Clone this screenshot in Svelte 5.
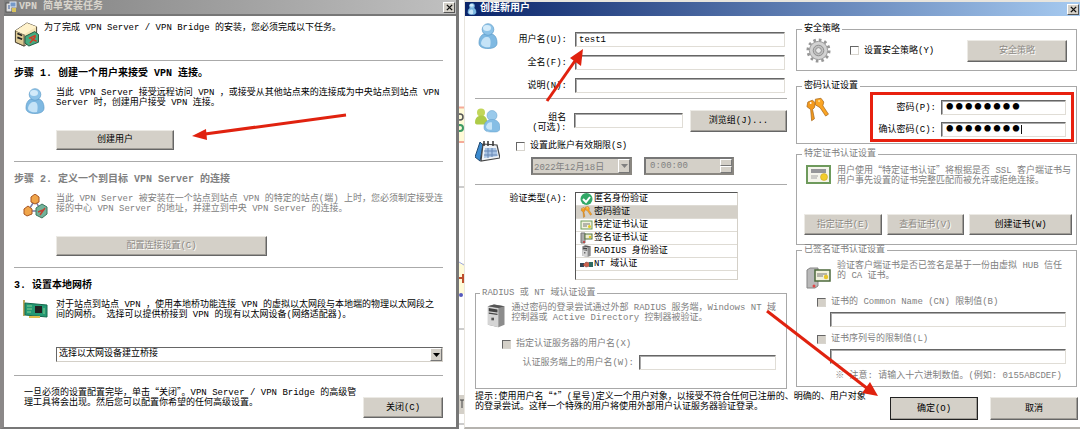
<script>
    let userName = $state('test1');
    let fullName = $state('');
    let note = $state('');
    let groupName = $state('');
    let password = $state('password');
    let confirmPassword = $state('password');
    let expires = $state(false);
    let usePolicy = $state(false);
    let authType = $state('password');

    const authTypes = [
        { id: 'anonymous', name: '匿名身份验证' },
        { id: 'password', name: '密码验证' },
        { id: 'cert', name: '特定证书认证' },
        { id: 'signed', name: '签名证书认证' },
        { id: 'radius', name: 'RADIUS 身份验证' },
        { id: 'nt', name: 'NT 域认证' }
    ];
</script>

{#snippet person(cls)}
    <svg class={cls} viewBox="0 0 20 26" aria-hidden="true">
        <path d="M1 20C1 14 4 11.500 6 11H14C17 12 19 15 19 20C19 24 15 25.500 10 25.500S1 24 1 20Z" fill="#7fb9e2" stroke="#5c9bc9" stroke-width=".7" />
        <path d="M3 20C4 15 7 13.500 10 14S13 20 12 24C7 25 3 23 3 20Z" fill="#c5e3f7" />
        <circle cx="10" cy="6.500" r="5.800" fill="#8dc3e8" stroke="#5c9bc9" stroke-width=".7" />
        <ellipse cx="9" cy="5" rx="4" ry="3" fill="#d3ebfa" />
    </svg>
{/snippet}

{#snippet cert()}
    <svg class="icon" viewBox="0 0 25 19" aria-hidden="true">
        <rect x="1" y="1" width="23" height="17" fill="#f5f5ec" stroke="#6e9a5c" stroke-width="2" />
        <path d="M5 5H20M5 7H20" stroke="#77787f" stroke-width="1.500" />
        <path d="M5 11H12M5 13H11" stroke="#a3a3a3" />
        <circle cx="18" cy="12" r="3.500" fill="#f3cd2c" stroke="#c59b1c" stroke-width=".5" />
    </svg>
{/snippet}

{#snippet keys(cls)}
    <svg class={cls} viewBox="0 0 25 26" aria-hidden="true">
        <path d="M2 5L7 3L10 6L9 11L7 13L9 23L6 25L5 13L1 10Z" fill="#f39a1d" stroke="#a7691f" stroke-width=".8" />
        <path d="M10 2L16 1L19 5L18 9L24 18L21 20L15 11L10 8Z" fill="#fba524" stroke="#a7691f" stroke-width=".8" />
        <circle cx="5" cy="6" r="1" fill="#fff" /><circle cx="14" cy="4" r="1.200" fill="#ffe08a" />
    </svg>
{/snippet}

{#snippet tower(cls)}
    <svg class={cls} viewBox="0 0 21 27" aria-hidden="true">
        <path d="M1 3L8 1L20 3V24L13 27L1 24Z" fill="#8c8c8c" />
        <path d="M1 3L13 5V27L1 24Z" fill="#d5d5d5" />
        <path d="M1 3L8 1L20 3L13 5Z" fill="#555" />
        <path d="M2 5L12 6.500V10L2 8.500ZM2 10L12 11.500V13L2 11.500Z" fill="#444" />
        <rect x="5" y="16" width="3" height="3" fill="#555" />
    </svg>
{/snippet}

{#snippet down()}
    <svg class="down" viewBox="0 0 7 4" aria-hidden="true"><path d="M0 0H7L3.500 4Z" fill="currentColor" /></svg>
{/snippet}

<div class="desktop">
    <section class="window setup">
        <header class="titlebar inactive">
            <svg class="title-icon" viewBox="0 0 12 12" aria-hidden="true">
                <rect x="1" y="2" width="6" height="9" fill="#ddd" stroke="#555" />
                <rect x="5" y="1" width="6" height="5" fill="#7398c9" stroke="#dfe6ef" />
                <path d="M3 5H5M3 7H5" stroke="#395b9c" /><rect x="7" y="7" width="4" height="4" fill="#d8c35e" />
            </svg>
            <h1>VPN 简单安装任务</h1>
            <button class="close" aria-label="关闭窗口"><svg viewBox="0 0 8 8"><path d="M1 1L7 7M7 1L1 7" stroke="#111" stroke-width="1.600" /></svg></button>
        </header>

        <div class="setup-body">
            <div class="intro">
                <svg class="icon" viewBox="0 0 25 26" aria-hidden="true">
                    <path d="M1 9L13 1L23 5V17L10 25L1 21Z" fill="#f3e3b4" stroke="#4c4536" />
                    <path d="M1 9L10 13V25L1 21Z" fill="#dcc993" stroke="#4c4536" />
                    <path d="M1 9L13 1L23 5L10 13Z" fill="#fff2cb" />
                    <path d="M3 12L8 14M3 16L8 18" stroke="#222" stroke-width="1.800" />
                    <path d="M11 15L21 10L25 13V21L15 25L11 22Z" fill="#45ab80" stroke="#22573f" />
                    <path d="M15 17L22 14M16 22L22 15M17 17L23 20" stroke="#d33c24" stroke-width="1.500" />
                </svg>
                <p>为了完成 VPN Server / VPN Bridge 的安装，您必须完成以下任务。</p>
            </div>

            <section class="step first">
                <h2>步骤 1. 创建一个用户来接受 VPN 连接。</h2>
                <div class="step-grid">
                    {@render person('person')}
                    <p>当此 VPN Server 接受远程访问 VPN ，或接受从其他站点来的连接成为中央站点到站点 VPN<br>Server 时，创建用户接受 VPN 连接。</p>
                    <button class="btn create">创建用户</button>
                </div>
            </section>

            <section class="step off">
                <h2>步骤 2. 定义一个到目标 VPN Server 的连接</h2>
                <div class="step-grid">
                    <svg class="icon" viewBox="0 0 25 25" aria-hidden="true">
                        <path d="M12 6L5 17L18 17Z" fill="none" stroke="#777ba8" stroke-width="1.500" />
                        <path d="M8 3L12 0L16 3V8L12 10L8 8Z" fill="#f0a54a" stroke="#a75522" />
                        <path d="M1 15L5 12L9 15V20L4 22L1 20Z" fill="#f0a54a" stroke="#a75522" />
                        <path d="M13 14L19 10L24 13V20L19 24L13 21Z" fill="#72b39a" stroke="#3d765f" />
                        <path d="M15 18L20 16M17 21L22 14" stroke="#c54132" stroke-width="1.500" />
                    </svg>
                    <p>当此 VPN Server 被安装在一个站点到站点 VPN 的特定的站点(端) 上时，您必须制定接受连<br>接的中心 VPN Server 的地址，并建立到中央 VPN Server 的连接。</p>
                    <button class="btn connect" disabled>配置连接设置(C)</button>
                </div>
            </section>

            <section class="step last">
                <h2>3. 设置本地网桥</h2>
                <div class="step-grid">
                    <svg class="icon" viewBox="0 0 25 19" aria-hidden="true">
                        <path d="M1 0V16" stroke="#bca65c" stroke-width="2" />
                        <path d="M2 3L24 5V17L2 15Z" fill="#249a74" stroke="#17694d" />
                        <rect x="12" y="6" width="7" height="7" fill="#222" />
                        <path d="M4 6H9M4 9H9M21 8V14M4 12H8" stroke="#8ad18f" />
                        <path d="M6 16H17V18H6Z" fill="#dfbd4d" />
                    </svg>
                    <p>对于站点到站点 VPN ，使用本地桥功能连接 VPN 的虚拟以太网段与本地端的物理以太网段之<br>间的网桥。 选择可以提供桥接到 VPN 的现有以太网设备(网络适配器)。</p>
                    <div class="combo">
                        <select aria-label="以太网设备"><option>选择以太网设备建立桥接</option></select>
                        <span class="arrow-box">{@render down()}</span>
                    </div>
                </div>
            </section>

            <footer class="setup-footer">
                <p>一旦必须的设置配置完毕，单击<span class="cn">“</span>关闭<span class="cn">”</span>。VPN Server / VPN Bridge 的高级管<br>理工具将会出现。然后您可以配置你希望的任何高级设置。</p>
                <button class="btn">关闭(C)</button>
            </footer>
        </div>
    </section>

    <svg class="behind" viewBox="0 0 5 429" aria-hidden="true">
        <rect width="5" height="429" fill="#fff" />
        <path d="M0 107H5V142H0Z" fill="#fffbd8" /><path d="M0 107.500H5M0 142H5" stroke="#f6ab98" stroke-width="2" />
        <circle cx="1" cy="117" r="3" fill="none" stroke="#555" stroke-width="1.500" /><circle cx="1" cy="128" r="3" fill="none" stroke="#3d9963" stroke-width="2" />
        <path d="M0 187H5M0 329H5M0 424H5" stroke="#999" />
        <path d="M0 263H5V294H0Z" fill="#fffbd8" /><path d="M0 262L5 265" stroke="#9ba7e5" />
        <path d="M0 278H4M4 274V283" stroke="#bd4d2b" stroke-width="2" /><circle cx="2" cy="295" r="2" fill="#5559bd" />
        <rect y="395" width="5" height="19" fill="#d4d0c8" /><path d="M1 400H5M3 400V408" stroke="#444" />
    </svg>

    <section class="window user">
        <header class="titlebar active">
            {@render person('title-icon')}
            <h1>创建新用户</h1>
            <button class="close" aria-label="关闭窗口"><svg viewBox="0 0 8 8"><path d="M1 1L7 7M7 1L1 7" stroke="#111" stroke-width="1.600" /></svg></button>
        </header>

        <div class="user-body">
            <div class="left">
                <div class="identity">
                    {@render person('person')}
                    <div class="fields">
                        <label for="user">用户名(U):</label><input id="user" type="text" bind:value={userName}>
                        <label for="full">全名(F):</label><input id="full" type="text" bind:value={fullName}>
                        <label for="note">说明(N):</label><input id="note" type="text" bind:value={note}>
                    </div>
                </div>

                <div class="group">
                    <svg class="icon" viewBox="0 0 25 24" aria-hidden="true">
                        <circle cx="6" cy="4" r="4" fill="#c2d65a" /><path d="M0 14C0 8 4 7 7 7S13 10 12 16H3Q0 16 0 14Z" fill="#aecb48" />
                        <circle cx="17" cy="7" r="5" fill="#9acaeb" stroke="#639fca" stroke-width=".5" />
                        <path d="M9 19C9 14 12 11 17 11S25 14 25 19S21 23.500 17 23.500S9 23 9 19Z" fill="#86bee5" stroke="#639fca" stroke-width=".5" />
                        <path d="M11 18C12 14 15 13 17 14V21C13 22 11 20 11 18Z" fill="#c7e5f8" />
                    </svg>
                    <label for="group">组名<br>(可选):</label>
                    <input id="group" type="text" bind:value={groupName}>
                    <button class="btn">浏览组(J)...</button>
                </div>

                <div class="expiry">
                    <svg class="icon" viewBox="0 0 25 23" aria-hidden="true">
                        <path d="M5 2L0 17L5 21L8 5Z" fill="#3b8bd0" stroke="#234b73" />
                        <path d="M8 4L22 5L25 18L6 21Z" fill="#f0f3f6" stroke="#444" stroke-width="1.200" />
                        <path d="M10 8L21 8L23 16L9 18Z" fill="#a9c4e4" />
                        <path d="M9 11H22M9 15H22M13 8V18M17 8V17" stroke="#6888b5" />
                        <path d="M9 1V6M13 1V6M18 1V6" stroke="#333" stroke-width="1.500" />
                    </svg>
                    <div class="expiry-fields">
                        <label class="check"><input type="checkbox" bind:checked={expires}>设置此账户有效期限(S)</label>
                        <div class="when">
                            <div class="combo date off"><input type="text" aria-label="日期" value="2022年12月18日" disabled><span class="arrow-box">{@render down()}</span></div>
                            <div class="combo time off">
                                <input type="text" aria-label="时间" value="0:00:00" disabled>
                                <span class="spin"><button disabled aria-label="增加"></button><button disabled aria-label="减少"></button></span>
                            </div>
                        </div>
                    </div>
                </div>

                <div class="auth">
                    <span class="auth-label" id="auth-label">验证类型(A):</span>
                    <ul role="listbox" aria-labelledby="auth-label">
                        {#each authTypes as type (type.id)}
                            <li role="option" aria-selected={authType === type.id}>
                                <button class="row" class:selected={authType === type.id} onclick={() => authType = type.id}>
                                    {#if type.id === 'anonymous'}
                                        <svg class="mini" viewBox="0 0 13 12"><circle cx="6.500" cy="6" r="6" fill="#31a866" /><path d="M3 6L6 9L10 4" fill="none" stroke="#fff" stroke-width="2" /></svg>
                                    {:else if type.id === 'password'}
                                        {@render keys('mini')}
                                    {:else if type.id === 'cert'}
                                        <svg class="mini" viewBox="0 0 13 12"><rect x="1" y="2" width="11" height="8" fill="#f2f2df" stroke="#6e9a5c" /><path d="M3 5H10M3 7H7" stroke="#777" /><circle cx="9.500" cy="7.500" r="1.500" fill="#e2c91f" /></svg>
                                    {:else if type.id === 'signed'}
                                        <svg class="mini" viewBox="0 0 13 12"><path d="M1 1H5V11H1Z" fill="#aaa" stroke="#777" /><rect x="5" y="2" width="7" height="5" fill="#eeedd0" stroke="#52723f" /><circle cx="10" cy="5" r="1.200" fill="#e2c91f" /><circle cx="4" cy="10" r="1" fill="#c33" /></svg>
                                    {:else if type.id === 'radius'}
                                        {@render tower('mini')}
                                    {:else}
                                        <svg class="mini" viewBox="0 0 13 12"><path d="M0 5H4V9H0Z" fill="#345" /><path d="M3 7L6 4L10 5V8L6 9Z" fill="#c9604c" stroke="#733" stroke-width=".5" /><path d="M9 4H13V9H9Z" fill="#2f6b63" /></svg>
                                    {/if}
                                    {type.name}
                                </button>
                            </li>
                        {/each}
                    </ul>
                </div>

                <fieldset class="radius off">
                    <legend>RADIUS 或 NT 域认证设置</legend>
                    <div class="info">
                        {@render tower('tower')}
                        <p>通过密码的登录尝试通过外部 RADIUS 服务端，Windows NT 域<br>控制器或 Active Directory 控制器被验证。</p>
                    </div>
                    <label class="check"><input type="checkbox" disabled>指定认证服务器的用户名(X)</label>
                    <div class="server-user"><label for="server">认证服务端上的用户名(W):</label><input id="server" type="text"></div>
                </fieldset>
            </div>

            <div class="right">
                <fieldset class="policy">
                    <legend>安全策略</legend>
                    <svg class="icon" viewBox="0 0 26 26" aria-hidden="true">
                        <circle cx="13" cy="13" r="11" fill="none" stroke="#979797" stroke-width="3" stroke-dasharray="2.700 3.060" />
                        <circle cx="13" cy="13" r="9.500" fill="#d2d2d2" stroke="#999" />
                        <circle cx="13" cy="13" r="5.500" fill="#c0c0c0" stroke="#8b8b8b" />
                        <circle cx="13" cy="13" r="3" fill="#e9e9e9" stroke="#8b8b8b" />
                    </svg>
                    <label class="check"><input type="checkbox" bind:checked={usePolicy}>设置安全策略(Y)</label>
                    <button class="btn" disabled>安全策略</button>
                </fieldset>

                <fieldset class="secret">
                    <legend>密码认证设置</legend>
                    {@render keys('icon')}
                    <div class="highlight">
                        <label for="pw">密码(P):</label><input id="pw" type="password" bind:value={password}>
                        <label for="pw2">确认密码(C):</label><span class="focused"><input id="pw2" type="password" bind:value={confirmPassword}><i></i></span>
                    </div>
                </fieldset>

                <fieldset class="user-cert off">
                    <legend>特定证书认证设置</legend>
                    <div class="info">
                        {@render cert()}
                        <p>用户使用<span class="cn">“</span>特定证书认证<span class="cn">”</span>将根据是否 SSL 客户端证书与<br>用户事先设置的证书完整匹配而被允许或拒绝连接。</p>
                    </div>
                    <div class="cert-buttons">
                        <button class="btn" disabled>指定证书(E)</button>
                        <button class="btn" disabled>查看证书(V)</button>
                        <button class="btn wide">创建证书(W)</button>
                    </div>
                </fieldset>

                <fieldset class="signed-cert off">
                    <legend>已签名证书认证设置</legend>
                    <div class="info">
                        <svg class="icon" viewBox="0 0 25 22" aria-hidden="true">
                            <path d="M1 3L4 1H12V19L9 21H1Z" fill="#b9b9b9" stroke="#858585" />
                            <rect x="9" y="3" width="15" height="11" fill="#f2f1dc" stroke="#4d6a3c" stroke-width="1.500" />
                            <path d="M11 7H21M11 9H17" stroke="#777" /><circle cx="20" cy="10" r="2.200" fill="#e8c529" />
                            <circle cx="8" cy="19" r="1.500" fill="#e04848" />
                        </svg>
                        <p>验证客户端证书是否已签名是基于一份由虚拟 HUB 信任<br>的 CA 证书。</p>
                    </div>
                    <div class="limits">
                        <label class="check"><input type="checkbox" disabled>证书的 Common Name (CN) 限制值(B)</label>
                        <input type="text" aria-label="Common Name">
                        <label class="check"><input type="checkbox" disabled>证书序列号的限制值(L)</label>
                        <input type="text" aria-label="证书序列号">
                        <p>※ 注意: 请输入十六进制数值。(例如: 0155ABCDEF)</p>
                    </div>
                </fieldset>
            </div>
        </div>

        <footer class="user-footer">
            <p>提示:使用用户名<span class="cn">“</span>*<span class="cn">”</span>(星号)定义一个用户对象，以接受不符合任何已注册的、明确的、用户对象<br>的登录尝试。这样一个特殊的用户将使用外部用户认证服务器验证登录。</p>
            <button class="btn ok">确定(O)</button>
            <button class="btn">取消</button>
        </footer>
    </section>

    <svg class="arrows" viewBox="0 0 1080 429" preserveAspectRatio="none" aria-hidden="true">
        <g stroke="#e0220f" stroke-width="3" fill="#e0220f">
            <path d="M346 115L205 134" /><path d="M192 136L206 129L207 140Z" stroke="none" />
            <path d="M547 101L577 58" /><path d="M583 49L581 66L570 58Z" stroke="none" />
            <path d="M767 311L868 389" /><path d="M878 396L862 393L870 382Z" stroke="none" />
        </g>
    </svg>
</div>

<style>
    :global(*) { box-sizing: border-box; }
    :global(body) { margin: 0; background: #fff; }

    .desktop { position: relative; display: grid; grid-template-columns: 459fr 5px 616fr; min-height: 100vh; overflow: hidden; font: 9px/10px "Liberation Mono", "Noto Sans CJK SC", monospace; color: #000; }
    .arrows { position: absolute; inset: 0; width: 100%; height: 100%; pointer-events: none; }
    .behind { width: 5px; height: 429px; }

    h1, h2, p, ul, fieldset { margin: 0; padding: 0; }
    p, label, legend, .auth-label { white-space: nowrap; }
    input, select, button { font: inherit; color: inherit; }
    .cn { font-family: "Noto Sans CJK SC", sans-serif; }
    .off { color: #808080; }

    .window { min-width: 0; background: #fff; }
    .setup { border-left: 4px solid #8b8888; border-right: 3px solid #777; border-bottom: 2px solid #777; }
    .user { border-left: 1px solid #e8e5de; border-top: 2px solid #e8e5de; border-bottom: 2px solid #b5b3af; }

    .titlebar { display: flex; align-items: center; gap: 2px; height: 14px; padding: 0 1px; color: #fff; }
    .titlebar h1 { flex: 1; font-size: 10px; line-height: 12px; font-weight: 700; }
    .inactive { height: 16px; border-bottom: 2px solid #777; background: linear-gradient(90deg, #808080, #c0c0c0); }
    .inactive h1 { color: #d8d4cc; }
    .active { background: linear-gradient(90deg, #0a246a, #a6caf0); }
    .title-icon { width: 12px; height: 12px; }
    .close { display: grid; place-items: center; width: 12px; height: 11px; padding: 0; background: #d4d0c8; border: 1px solid; border-color: #fff #555 #555 #fff; }
    .close svg { width: 7px; height: 7px; }

    .icon { width: 25px; height: 25px; }
    .person { width: 20px; height: 26px; }
    .tower { width: 21px; height: 27px; }

    .btn { height: 20px; padding: 0; background: #d4d0c8; border: 1px solid; border-color: #eceae5 #666 #666 #eceae5; box-shadow: inset -1px -1px #a09d97; color: #000; white-space: nowrap; }
    .btn:disabled { color: #8d8a85; text-shadow: 1px 1px #fff; }

    input[type='text'], input[type='password'] { width: 100%; min-width: 0; height: 15px; padding: 0 3px; background: #fff; border: 1px solid; border-color: #666 #e0ddd6 #e0ddd6 #666; border-radius: 0; box-shadow: inset 1px 1px #aaa; outline: none; }
    input[type='password'] { display: block; font-family: "Liberation Serif", serif; font-size: 27px; line-height: 13px; }
    input[type='checkbox'] { appearance: none; width: 9px; height: 9px; margin: 0; background: #fff; border: 1px solid; border-color: #666 #d8d5ce #d8d5ce #666; }
    input[type='checkbox']:disabled { background: #d4d0c8; }
    .check { display: flex; align-items: center; gap: 5px; }

    .combo { display: flex; height: 15px; border: 1px solid; border-color: #666 #d4d0c8 #d4d0c8 #666; background: #fff; }
    .combo select { flex: 1; min-width: 0; height: 13px; appearance: none; padding: 0 2px; line-height: 13px; background: none; border: none; outline: none; }
    .combo input[type='text'] { flex: 1; height: 100%; padding: 0 1px; background: none; border: none; box-shadow: none; }
    .combo.off { height: 18px; background: #d4d0c8; border: 2px solid; border-color: #777 #8a8781 #8a8781 #777; }
    .arrow-box { display: grid; place-items: center; width: 12px; background: #d4d0c8; border: 1px solid; border-color: #fff #777 #777 #fff; }
    .down { width: 7px; height: 4px; }

    /* setup window */
    .setup-body { padding: 0 13px 0 10px; }
    .intro { display: flex; gap: 5px; height: 44px; padding-top: 6px; }
    .intro p { padding-top: 1px; }
    .step { padding: 12px 0 11px; border-top: 1px solid #aaa; }
    .step.first { padding-top: 7px; }
    .step.last { padding-bottom: 13px; }
    .step h2 { margin-bottom: 8px; font-size: 10px; line-height: 12px; font-weight: 700; white-space: nowrap; }
    .step-grid { display: grid; grid-template-columns: 42px 1fr; row-gap: 22px; }
    .step-grid > svg { grid-row: 1 / 3; justify-self: center; }
    .last .step-grid { row-gap: 27px; }
    .last .icon { height: 19px; }
    .create { width: 118px; }
    .connect { width: 211px; }
    .setup-footer { display: flex; justify-content: space-between; padding: 11px 0 0 10px; border-top: 1px solid #aaa; }
    .setup-footer .btn { width: 80px; height: 21px; margin-top: 10px; }

    /* user window */
    .user-body { display: grid; grid-template-columns: 312fr 281fr; gap: 9px; padding: 0 3px 0 10px; }
    .left, .right { min-width: 0; }
    .identity { display: flex; padding: 7px 2px 5px 3px; border-bottom: 1px solid #aaa; }
    .fields { flex: 1; display: grid; grid-template-columns: 69px 1fr; gap: 8px; align-items: center; padding-top: 9px; }
    .fields label, .group label, .auth-label { text-align: right; }
    .group { display: grid; grid-template-columns: 25px 59px 109px 97px; justify-content: space-between; column-gap: 6px; align-items: center; padding-top: 9px; }
    .group label { padding-top: 5px; }
    .group .btn { height: 22px; }
    .expiry { display: flex; gap: 16px; padding: 6px 0 9px; border-bottom: 1px solid #aaa; }
    .expiry-fields { display: grid; gap: 6px; padding-top: 2px; }
    .when { display: flex; gap: 12px; padding-left: 15px; }
    .date { width: 101px; }
    .time { width: 90px; }
    .time.combo input[type='text'] { padding-left: 4px; }
    .spin { display: grid; width: 12px; }
    .spin button { min-height: 0; padding: 0; background: #d4d0c8; border: 1px solid; border-color: #fff #777 #777 #fff; }
    .auth { display: grid; grid-template-columns: 92px 163px; gap: 8px; padding-top: 7px; }
    .auth-label { padding-top: 2px; }
    .auth ul { height: 88px; list-style: none; border: 1px solid; border-color: #555 #d4d0c8 #d4d0c8 #555; }
    .row { display: flex; align-items: center; gap: 1px; width: 100%; height: 13px; padding: 0 4px; background: none; border: none; border-bottom: 1px solid #dedbd4; text-align: left; }
    .row.selected { background: #d4d0c8; }
    .mini { width: 13px; height: 12px; }

    fieldset { min-width: 0; border: 1px solid #a8a8a8; }
    legend { margin-left: 5px; padding: 0 2px; }
    .info { display: flex; gap: 6px; }
    .radius { height: 101px; margin-top: 8px; padding: 4px 10px 0 11px; }
    .radius legend { margin-left: -7px; }
    .radius p { padding-top: 1px; }
    .radius > .check { margin: 10px 0 6px 15px; }
    .server-user { display: flex; align-items: center; justify-content: flex-end; gap: 5px; }
    .server-user input[type='text'] { width: 137px; }

    .right { display: flex; flex-direction: column; padding-top: 8px; }
    .policy { display: flex; align-items: center; padding: 4px 9px 7px; }
    .policy legend, .secret legend { margin-left: -4px; }
    .policy .check { flex: 1; margin-left: 19px; }
    .policy .btn { width: 100px; height: 22px; }
    .secret { display: flex; margin-top: 10px; padding: 1px 2px 1px 9px; }
    .secret .icon { margin-top: 5px; }
    .highlight { flex: 1; display: grid; grid-template-columns: 1fr 125px; gap: 7px 5px; align-items: center; margin-left: 41px; padding: 5px 5px 2px; border: 3px solid #e8200f; }
    .highlight label { text-align: right; }
    .focused { position: relative; display: block; }
    .focused i { position: absolute; left: 80px; top: 3px; width: 1px; height: 9px; background: #111; }
    .user-cert { margin-top: 5px; padding: 6px 0 9px; }
    .user-cert .info, .signed-cert .info { padding-left: 9px; }
    .user-cert .icon { height: 19px; }
    .cert-buttons { display: flex; gap: 5px; margin-top: 28px; padding: 0 4px 0 7px; }
    .cert-buttons .btn { flex: 3; height: 21px; }
    .cert-buttons .wide { flex: 4; }
    .signed-cert { padding: 6px 0 5px; }
    .signed-cert .info svg { height: 22px; margin-top: 6px; }
    .limits { display: grid; gap: 5px; padding: 8px 10px 0 20px; }
    .limits input[type='text'] { width: auto; margin: 0 0 2px 13px; }
    .limits p { text-align: right; padding-right: 4px; }

    .user-footer { display: grid; grid-template-columns: 1fr 88px 88px; gap: 12px; padding: 2px 2px 0 10px; }
    .user-footer p { min-width: 0; }
    .user-footer .btn { height: 23px; margin-top: 6px; }
    .user-footer .ok { border-color: #222; }
</style>
